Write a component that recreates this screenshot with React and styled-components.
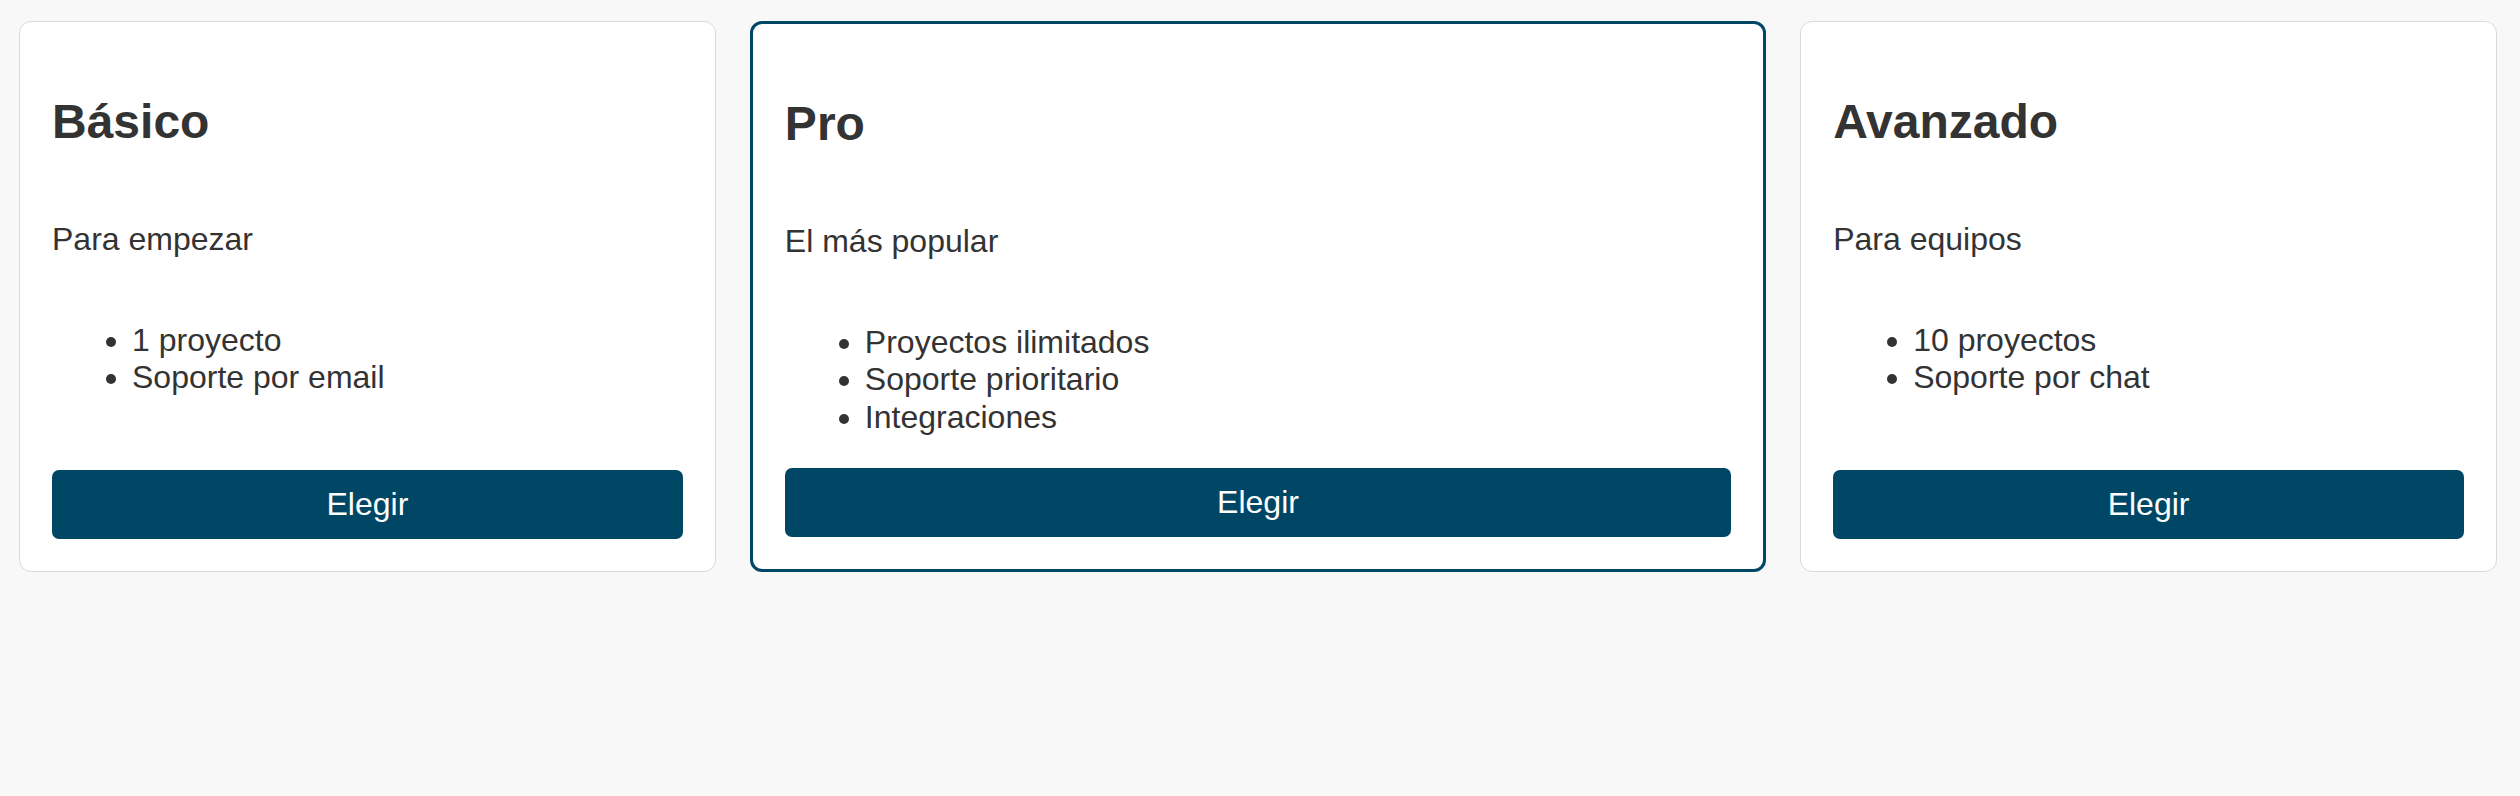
import React from 'react';
import styled, { createGlobalStyle } from 'styled-components';

const GlobalStyle = createGlobalStyle`
  html,
  body {
    margin: 0;
    background: #f8f8f8;
    font-family: 'Liberation Sans', Arial, sans-serif;
    color: #333;
  }
`;

const PlansRow = styled.section`
  display: flex;
  align-items: stretch;
  gap: 34px;
  padding: 21px 23px 0 19px;
`;

const PlanCard = styled.article`
  flex: ${(props) => (props.featured ? '1.5 1 0' : '1 1 0')};
  display: flex;
  flex-direction: column;
  padding: 32px;
  background: #fff;
  border: ${(props) => (props.featured ? '3px solid #004766' : '1px solid #dadada')};
  border-radius: 12px;
`;

const PlanName = styled.h2`
  margin: 40px 0;
  font-size: 48px;
  font-weight: 700;
  color: #333;
`;

const PlanTagline = styled.p`
  margin: 32px 0;
  font-size: 32px;
`;

const FeatureList = styled.ul`
  margin: 32px 0;
  padding-left: 80px;
  font-size: 32px;
  line-height: 37.3px;
`;

const ChooseButton = styled.button`
  margin-top: auto;
  padding: 16px;
  border: none;
  border-radius: 7px;
  background: #004766;
  color: #fff;
  font-family: 'Liberation Sans', Arial, sans-serif;
  font-size: 32px;
  cursor: pointer;
`;

const plans = [
  { id: 'basic', name: 'Básico', tagline: 'Para empezar', features: ['1 proyecto', 'Soporte por email'] },
  {
    id: 'pro',
    name: 'Pro',
    tagline: 'El más popular',
    features: ['Proyectos ilimitados', 'Soporte prioritario', 'Integraciones'],
    featured: true,
  },
  { id: 'advanced', name: 'Avanzado', tagline: 'Para equipos', features: ['10 proyectos', 'Soporte por chat'] },
];

const App = () => (
  <>
    <GlobalStyle />
    <PlansRow>
      {plans.map((plan) => (
        <PlanCard key={plan.id} featured={plan.featured}>
          <PlanName>{plan.name}</PlanName>
          <PlanTagline>{plan.tagline}</PlanTagline>
          <FeatureList>
            {plan.features.map((feature) => (
              <li key={feature}>{feature}</li>
            ))}
          </FeatureList>
          <ChooseButton type="button">Elegir</ChooseButton>
        </PlanCard>
      ))}
    </PlansRow>
  </>
);

export default App;
